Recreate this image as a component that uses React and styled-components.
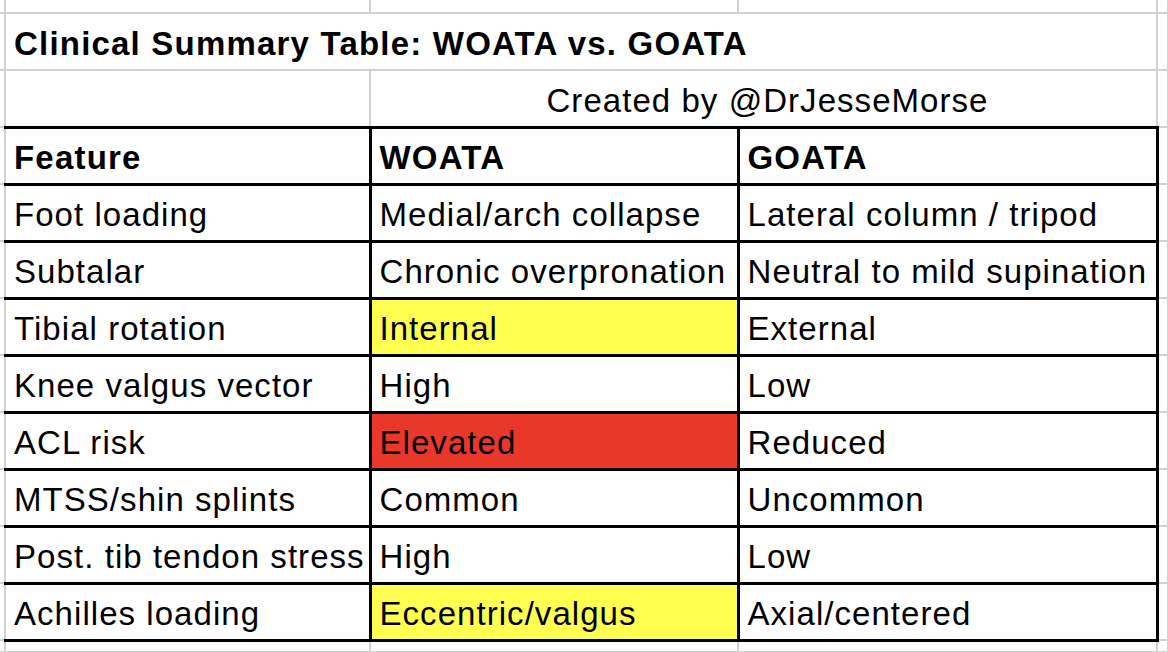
import React from 'react';
import styled, { createGlobalStyle } from 'styled-components';

const GRID = '#d2d2d2';
const INK = '#000';

const rows = [
  { feature: 'Foot loading', woata: 'Medial/arch collapse', goata: 'Lateral column / tripod' },
  { feature: 'Subtalar', woata: 'Chronic overpronation', goata: 'Neutral to mild supination' },
  { feature: 'Tibial rotation', woata: 'Internal', goata: 'External', fill: 'yellow' },
  { feature: 'Knee valgus vector', woata: 'High', goata: 'Low' },
  { feature: 'ACL risk', woata: 'Elevated', goata: 'Reduced', fill: 'red' },
  { feature: 'MTSS/shin splints', woata: 'Common', goata: 'Uncommon' },
  { feature: 'Post. tib tendon stress', woata: 'High', goata: 'Low' },
  { feature: 'Achilles loading', woata: 'Eccentric/valgus', goata: 'Axial/centered', fill: 'yellow' },
];

const fills = {
  yellow: '#ffff52',
  red: '#e9382a',
};

const GlobalStyle = createGlobalStyle`
  html, body {
    margin: 0;
    padding: 0;
    background: #fff;
    overflow: hidden;
  }
  body {
    font-family: "Liberation Sans", Arial, sans-serif;
    color: ${INK};
  }
`;

const Sheet = styled.table`
  width: 1168px;
  table-layout: fixed;
  border-collapse: collapse;
  font-family: "Liberation Sans", Arial, sans-serif;
  font-size: 33px;
  letter-spacing: 1.05px;
  line-height: 38px;
`;

const Row = styled.tr`
  height: ${props => props.h}px;
`;

// plain spreadsheet cell with light gridlines
const Cell = styled.td`
  border: 2px solid ${GRID};
  border-top: ${props => (props.noTop ? 'none' : `2px solid ${GRID}`)};
  padding: 0 0 6px 8px;
  vertical-align: bottom;
  white-space: nowrap;
  overflow: visible;
  font-weight: ${props => (props.bold ? 700 : 400)};
  letter-spacing: ${props => (props.bold ? '1.2px' : '1.05px')};
  text-align: ${props => (props.center ? 'center' : 'left')};
`;

const Gutter = styled.td`
  border: 2px solid ${GRID};
  border-left: none;
  border-top: ${props => (props.noTop ? 'none' : `2px solid ${GRID}`)};
  padding: 0;
`;

// cells inside the black bordered summary table
const BoxCell = styled.td`
  border: 3px solid ${INK};
  border-left: ${props => (props.first ? `2px solid ${GRID}` : `3px solid ${INK}`)};
  padding: 0 0 6px 8px;
  vertical-align: bottom;
  white-space: nowrap;
  overflow: hidden;
  font-weight: ${props => (props.bold ? 700 : 400)};
  letter-spacing: ${props => (props.bold ? '1.2px' : '1.05px')};
  background: ${props => (props.fill ? fills[props.fill] : '#fff')};
`;

export default function App() {
  return (
    <>
      <GlobalStyle />
      <Sheet>
        <colgroup>
          <col style={{ width: 5 }} />
          <col style={{ width: 365 }} />
          <col style={{ width: 368 }} />
          <col style={{ width: 419 }} />
          <col style={{ width: 11 }} />
        </colgroup>
        <tbody>
          <Row h={13}>
            <Gutter noTop />
            <Cell noTop />
            <Cell noTop />
            <Cell noTop />
            <Cell noTop />
          </Row>
          <Row h={57}>
            <Gutter />
            <Cell colSpan={3} bold>
              Clinical Summary Table: WOATA vs. GOATA
            </Cell>
            <Cell />
          </Row>
          <Row h={57}>
            <Gutter />
            <Cell />
            <Cell colSpan={2} center>
              Created by @DrJesseMorse
            </Cell>
            <Cell />
          </Row>
          <Row h={57}>
            <Gutter />
            <BoxCell first bold>Feature</BoxCell>
            <BoxCell bold>WOATA</BoxCell>
            <BoxCell bold>GOATA</BoxCell>
            <Cell />
          </Row>
          {rows.map(r => (
            <Row h={57} key={r.feature}>
              <Gutter />
              <BoxCell first>{r.feature}</BoxCell>
              <BoxCell fill={r.fill}>{r.woata}</BoxCell>
              <BoxCell>{r.goata}</BoxCell>
              <Cell />
            </Row>
          ))}
          <Row h={12}>
            <Gutter />
            <Cell />
            <Cell />
            <Cell />
            <Cell />
          </Row>
        </tbody>
      </Sheet>
    </>
  );
}
